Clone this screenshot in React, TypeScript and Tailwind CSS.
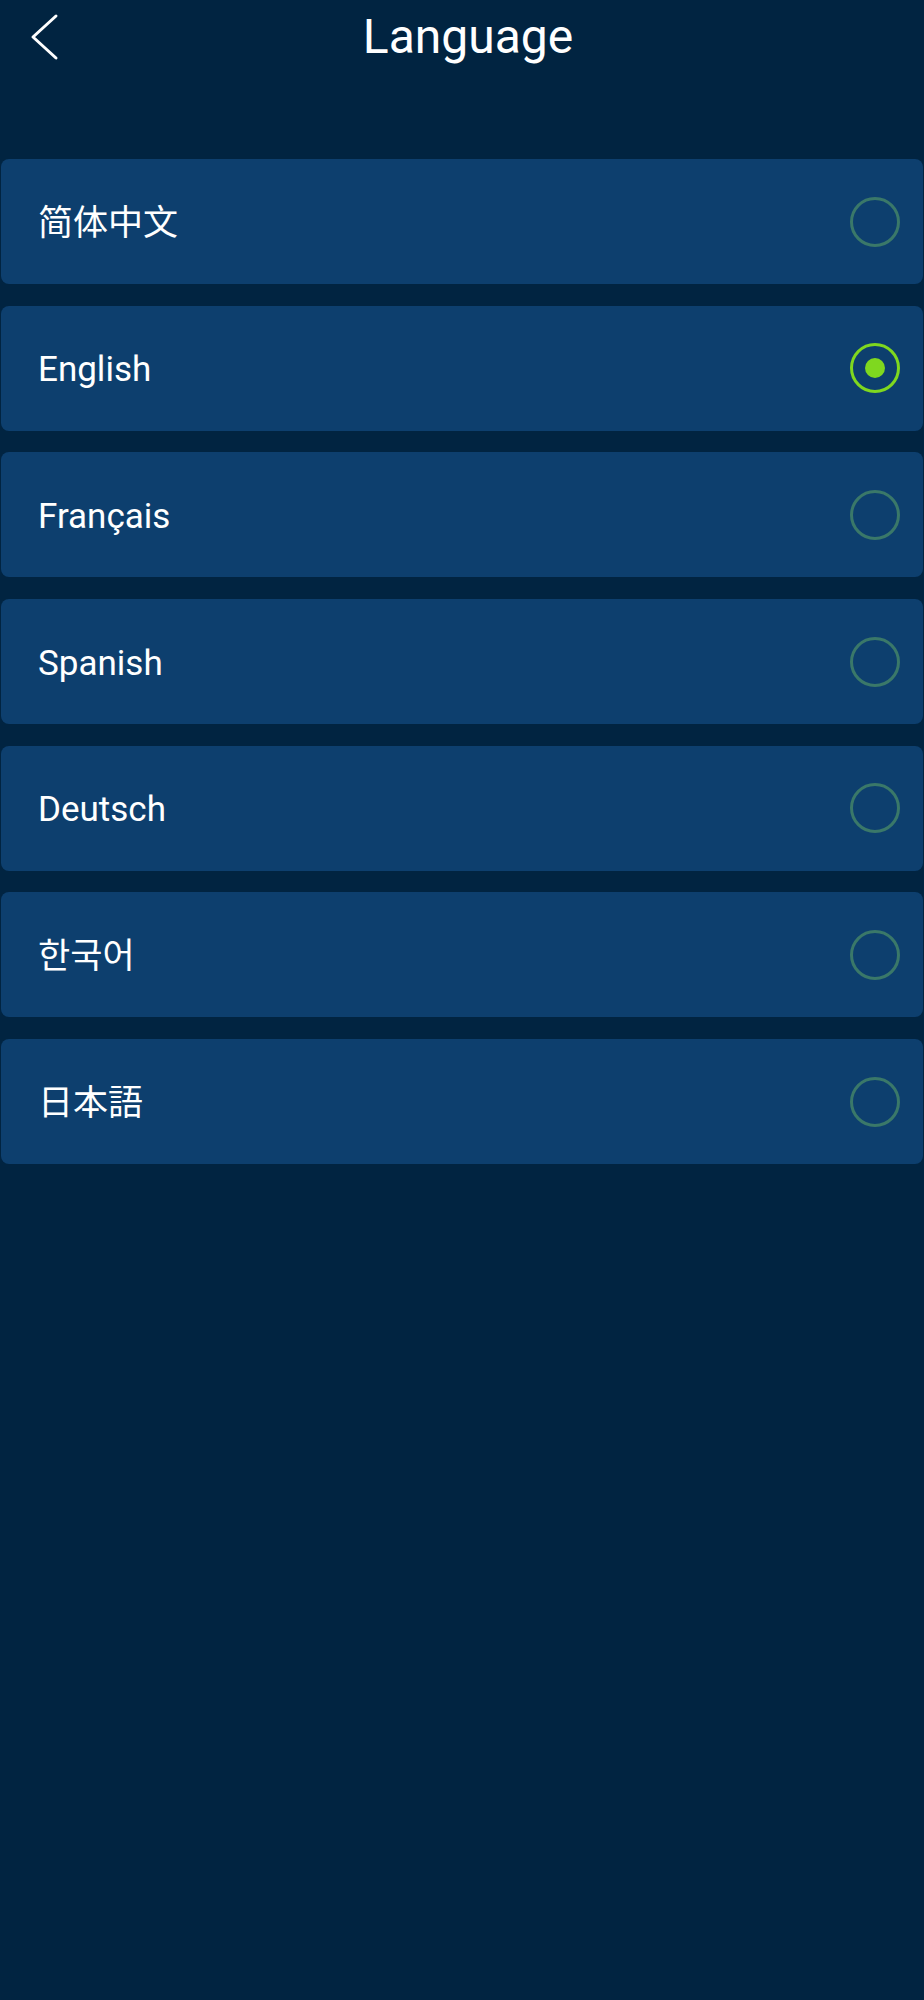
import React from 'react';

type Lang = { label: string; font: string };

const languages: Lang[] = [
  { label: '简体中文', font: "font-['Roboto','Noto_Sans_CJK_SC',sans-serif]" },
  { label: 'English', font: "font-['Roboto','Noto_Sans_CJK_SC',sans-serif]" },
  { label: 'Français', font: "font-['Roboto','Noto_Sans_CJK_SC',sans-serif]" },
  { label: 'Spanish', font: "font-['Roboto','Noto_Sans_CJK_SC',sans-serif]" },
  { label: 'Deutsch', font: "font-['Roboto','Noto_Sans_CJK_SC',sans-serif]" },
  { label: '한국어', font: "font-['Roboto','Noto_Sans_CJK_KR',sans-serif]" },
  { label: '日本語', font: "font-['Roboto','Noto_Sans_CJK_JP',sans-serif]" },
];

const Radio: React.FC<{ checked: boolean }> = ({ checked }) =>
  checked ? (
    <div className="w-[50px] h-[50px] rounded-full border-[3px] border-[#7fd81f] flex items-center justify-center">
      <div className="w-[20px] h-[20px] rounded-full bg-[#7fd81f]" />
    </div>
  ) : (
    <div className="w-[50px] h-[50px] rounded-full border-[3px] border-[#3a7869]" />
  );

export default function App() {
  const selected = 'English';

  return (
    <div className="min-h-[2000px] bg-[#012441] text-white font-['Roboto',sans-serif]">
      <header className="relative h-[72px] flex items-center justify-center">
        <button className="absolute left-[30px] top-[13px] w-[30px] h-[48px] flex items-center justify-center">
          <svg width="30" height="48" viewBox="0 0 30 48" fill="none">
            <path d="M26 3 L3 24 L26 45" stroke="white" strokeWidth="3" strokeLinecap="round" strokeLinejoin="round" />
          </svg>
        </button>
        <h1 className="text-[48px] leading-none font-normal ml-[12px] mt-[2px]">Language</h1>
      </header>

      <div className="pt-[87px] flex flex-col gap-[21.7px]">
        {languages.map((lang) => (
          <div
            key={lang.label}
            className="h-[125px] mx-[1px] rounded-[8px] bg-[#0d3f6e] flex items-center justify-between pl-[37px] pr-[23px]"
          >
            <span className={`${lang.font} text-[35px] leading-none mt-[3px]`}>{lang.label}</span>
            <Radio checked={lang.label === selected} />
          </div>
        ))}
      </div>
    </div>
  );
}
